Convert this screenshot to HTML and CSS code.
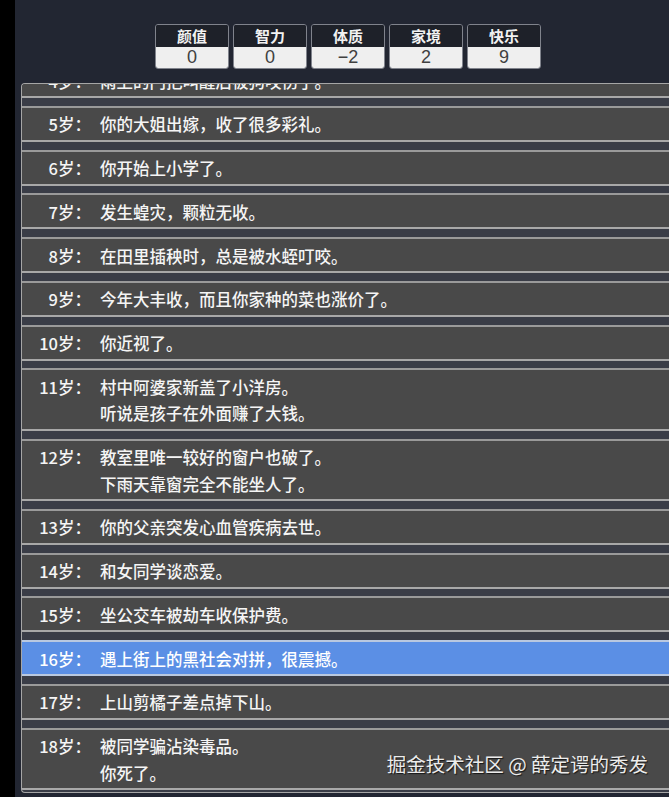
FILE: index.html
```html
<!DOCTYPE html>
<html lang="zh-CN">
<head>
<meta charset="utf-8">
<title>人生重开</title>
<link rel="stylesheet" href="styles.css">
</head>
<body>
<div class="app">
  <div class="side"></div>
  <div class="main">
    <div class="stats">
      <div class="stat"><div class="stat-label">颜值</div><div class="stat-value">0</div></div>
      <div class="stat"><div class="stat-label">智力</div><div class="stat-value">0</div></div>
      <div class="stat"><div class="stat-label">体质</div><div class="stat-value">−2</div></div>
      <div class="stat"><div class="stat-label">家境</div><div class="stat-value">2</div></div>
      <div class="stat"><div class="stat-label">快乐</div><div class="stat-value">9</div></div>
    </div>
    <div class="log">
      <ul class="events">
        <li class="event"><span class="age">4岁：</span><span class="text">雨上的门把叫醒后被狗咬伤了。</span></li>
        <li class="event"><span class="age">5岁：</span><span class="text">你的大姐出嫁，收了很多彩礼。</span></li>
        <li class="event"><span class="age">6岁：</span><span class="text">你开始上小学了。</span></li>
        <li class="event"><span class="age">7岁：</span><span class="text">发生蝗灾，颗粒无收。</span></li>
        <li class="event"><span class="age">8岁：</span><span class="text">在田里插秧时，总是被水蛭叮咬。</span></li>
        <li class="event"><span class="age">9岁：</span><span class="text">今年大丰收，而且你家种的菜也涨价了。</span></li>
        <li class="event"><span class="age">10岁：</span><span class="text">你近视了。</span></li>
        <li class="event"><span class="age">11岁：</span><span class="text">村中阿婆家新盖了小洋房。<br>听说是孩子在外面赚了大钱。</span></li>
        <li class="event"><span class="age">12岁：</span><span class="text">教室里唯一较好的窗户也破了。<br>下雨天靠窗完全不能坐人了。</span></li>
        <li class="event"><span class="age">13岁：</span><span class="text">你的父亲突发心血管疾病去世。</span></li>
        <li class="event"><span class="age">14岁：</span><span class="text">和女同学谈恋爱。</span></li>
        <li class="event"><span class="age">15岁：</span><span class="text">坐公交车被劫车收保护费。</span></li>
        <li class="event is-current"><span class="age">16岁：</span><span class="text">遇上街上的黑社会对拼，很震撼。</span></li>
        <li class="event"><span class="age">17岁：</span><span class="text">上山剪橘子差点掉下山。</span></li>
        <li class="event"><span class="age">18岁：</span><span class="text">被同学骗沾染毒品。<br>你死了。</span></li>
      </ul>
    </div>
  </div>
  <div class="watermark">掘金技术社区 @ 薛定谔的秀发</div>
</div>
</body>
</html>
```

FILE: styles.css
```css
* { box-sizing: border-box; }

html, body {
  margin: 0;
  padding: 0;
  width: 669px;
  height: 797px;
  overflow: hidden;
  background: #000;
  font-family: "Noto Sans CJK SC", "Noto Sans", sans-serif;
}

.app {
  position: relative;
  display: flex;
  width: 669px;
  height: 797px;
}

.side {
  width: 15px;
  flex: none;
  background: #000;
}

.main {
  flex: 1;
  min-width: 0;
  background: #222632;
  padding: 24px 0 0 6px;
  display: flex;
  flex-direction: column;
}

.stats {
  display: flex;
  gap: 4px;
  margin-left: 134px;
}

.stat {
  width: 74px;
  border: 1px solid #80838c;
  border-radius: 3px;
  overflow: hidden;
  text-align: center;
}

.stat-label {
  height: 22px;
  line-height: 22px;
  background: #1e2129;
  color: #f2f2f2;
  font-size: 15px;
  font-weight: 700;
}

.stat-value {
  height: 21px;
  line-height: 21px;
  background: #efefef;
  color: #404040;
  font-family: "Liberation Sans", "Noto Sans", sans-serif;
  font-size: 18px;
}

.log {
  margin-top: 14px;
  width: 680px;
  height: 710px;
  border: 1px solid #a6a6a6;
  border-right: none;
  border-radius: 4px 0 0 4px;
  background: #3a3d47;
  overflow: hidden;
}

.events {
  list-style: none;
  margin: -22px 0 0;
  padding: 0;
}

.event {
  display: flex;
  align-items: flex-start;
  background: #494949;
  border-top: 2px solid #9a9a9a;
  border-bottom: 2px solid #a8a8a8;
  padding: 3.5px 0 2px;
  margin-bottom: 7.75px;
  color: #f5f5f5;
  font-size: 16.5px;
  font-weight: 500;
  line-height: 26.5px;
}

.event.is-current {
  background: #5b8fe5;
  border-top-color: #b9c8e0;
  border-bottom-color: #b9c8e0;
  color: #fff;
}

.age {
  flex: none;
  width: 69px;
  text-align: right;
}

.text {
  margin-left: 9px;
}

.watermark {
  position: absolute;
  right: 21px;
  top: 750px;
  font-size: 19.5px;
  line-height: 28px;
  color: #ececec;
  text-shadow: 1px 1px 1px rgba(0, 0, 0, 0.7);
  white-space: nowrap;
}
```
